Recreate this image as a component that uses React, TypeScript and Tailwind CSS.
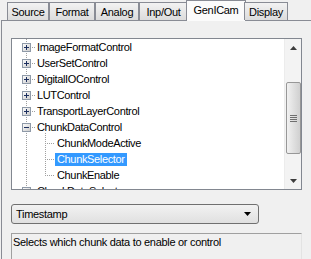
import React from "react";

const tabs = [
  { label: "Source", w: 42 },
  { label: "Format", w: 46 },
  { label: "Analog", w: 44 },
  { label: "Inp/Out", w: 49 },
  { label: "GenICam", w: 56, active: true },
  { label: "Display", w: 44 },
];

type Row = { label: string; level: number; expander?: "plus" | "minus"; selected?: boolean };

const rows: Row[] = [
  { label: "ImageFormatControl", level: 0, expander: "plus" },
  { label: "UserSetControl", level: 0, expander: "plus" },
  { label: "DigitalIOControl", level: 0, expander: "plus" },
  { label: "LUTControl", level: 0, expander: "plus" },
  { label: "TransportLayerControl", level: 0, expander: "plus" },
  { label: "ChunkDataControl", level: 0, expander: "minus" },
  { label: "ChunkModeActive", level: 1 },
  { label: "ChunkSelector", level: 1, selected: true },
  { label: "ChunkEnable", level: 1 },
  { label: "ChunkDataSelector", level: 0, expander: "plus" },
];

function Expander({ kind }: { kind: "plus" | "minus" }) {
  return (
    <svg width="9" height="9" viewBox="0 0 9 9" className="block shrink-0">
      <defs>
        <linearGradient id={`eg-${kind}`} x1="0" y1="0" x2="1" y2="1">
          <stop offset="0" stopColor="#ffffff" />
          <stop offset="1" stopColor="#c8c8c8" />
        </linearGradient>
      </defs>
      <rect x="0.5" y="0.5" width="8" height="8" fill={`url(#eg-${kind})`} stroke="#8f9aa8" />
      <rect x="2" y="4" width="5" height="1" fill="#1d2f5e" />
      {kind === "plus" && <rect x="4" y="2" width="1" height="5" fill="#1d2f5e" />}
    </svg>
  );
}

function TreeLines() {
  const dots: React.ReactNode[] = [];
  for (let y = 0; y < 150; y += 2) dots.push(<rect key={`v0-${y}`} x={14} y={y} width={1} height={1} fill="#a0a0a0" />);
  rows.forEach((r, i) => {
    const cy = i * 16 + 8;
    if (r.level === 0) {
      for (let x = 20; x <= 23; x += 2) dots.push(<rect key={`h0-${i}-${x}`} x={x} y={cy} width={1} height={1} fill="#a0a0a0" />);
    } else {
      for (let x = 35; x <= 41; x += 2) dots.push(<rect key={`h1-${i}-${x}`} x={x} y={cy} width={1} height={1} fill="#a0a0a0" />);
    }
  });
  for (let y = 94; y <= 136; y += 2) dots.push(<rect key={`v1-${y}`} x={33} y={y} width={1} height={1} fill="#a0a0a0" />);
  return (
    <svg className="absolute left-0 top-0" width="270" height="150">
      {dots}
    </svg>
  );
}

function Arrow({ dir }: { dir: "up" | "down" }) {
  return (
    <svg width="7" height="4" viewBox="0 0 7 4">
      {dir === "up" ? <path d="M3.5 0 L7 4 L0 4 Z" fill="#3c3c3c" /> : <path d="M0 0 L7 0 L3.5 4 Z" fill="#3c3c3c" />}
    </svg>
  );
}

export default function App() {
  return (
    <div
      className="relative w-[311px] h-[259px] bg-[#f0f0f0] overflow-hidden text-[11px] text-black"
      style={{ fontFamily: '"Liberation Sans", Arial, sans-serif' }}
    >
      {/* tab strip */}
      <div className="h-[20px] flex items-end pl-[7px] relative z-10">
        {tabs.map((t) =>
          t.active ? (
            <div
              key={t.label}
              className="shrink-0 h-[21px] -mb-[1px] -mx-[2px] px-[2px] border border-b-0 border-[#898c95] bg-[#fbfbfb] flex items-start justify-center pt-[1px] leading-[16px] tracking-[-0.3px]"
              style={{ width: t.w + 4 }}
            >
              {t.label}
            </div>
          ) : (
            <div
              key={t.label}
              className="shrink-0 h-[18px] border border-b-0 border-[#898c95] bg-gradient-to-b from-[#f2f2f2] to-[#dcdcdc] flex items-center justify-center leading-[16px] tracking-[-0.3px]"
              style={{ width: t.w }}
            >
              {t.label}
            </div>
          )
        )}
      </div>

      {/* tab page */}
      <div className="ml-[1px] h-[240px] border-l border-t border-[#898c95] bg-[#f0f0f0] pl-[9px] pt-[17px] flex flex-col items-start">
        {/* tree view */}
        <div className="w-[291px] h-[152px] shrink-0 border border-[#828790] bg-white flex">
          <div className="relative flex-1 h-[150px] overflow-hidden">
            <TreeLines />
            {rows.map((r, i) => (
              <div key={i} className="relative h-[16px] flex items-center">
                {r.level === 0 ? (
                  <>
                    <div className="w-[10px] shrink-0" />
                    <Expander kind={r.expander!} />
                    <div className="w-[6px] shrink-0" />
                    <span className="leading-[13px] tracking-[-0.35px] whitespace-nowrap">{r.label}</span>
                  </>
                ) : (
                  <>
                    <div className="w-[43px] shrink-0" />
                    <span
                      className={`leading-[13px] h-[13px] px-[2px] tracking-[-0.35px] whitespace-nowrap ${
                        r.selected ? "bg-[#3399ff] text-white" : ""
                      }`}
                    >
                      {r.label}
                    </span>
                  </>
                )}
              </div>
            ))}
          </div>
          {/* scrollbar */}
          <div className="w-[17px] shrink-0 h-[150px] bg-[#f3f3f3] border-l border-[#ececec] flex flex-col items-center">
            <div className="h-[17px] w-full flex items-center justify-center">
              <Arrow dir="up" />
            </div>
            <div className="h-[26px]" />
            <div className="w-[15px] h-[72px] rounded-[2px] border border-[#979797] bg-gradient-to-r from-[#f1f1f1] via-[#e0e0e0] to-[#d0d0d0] flex flex-col items-center justify-center gap-[1px]">
              {[0, 1, 2, 3].map((k) => (
                <div key={k} className="w-[7px] h-[1px] bg-[#6f6f6f]" />
              ))}
            </div>
            <div className="flex-1" />
            <div className="h-[17px] w-full flex items-center justify-center">
              <Arrow dir="down" />
            </div>
          </div>
        </div>

        {/* combobox */}
        <div className="mt-[14px] w-[248px] shrink-0 h-[20px] rounded-[3px] border border-[#707070] bg-gradient-to-b from-[#f2f2f2] to-[#e0e0e0] flex items-center justify-between pl-[4px] pr-[7px]">
          <span className="tracking-[-0.3px]">Timestamp</span>
          <svg width="7" height="4" viewBox="0 0 7 4" className="shrink-0">
            <path d="M0 0 L7 0 L3.5 4 Z" fill="#000" />
          </svg>
        </div>

        {/* description */}
        <div className="mt-[9px] w-[291px] shrink-0 h-[40px] border border-[#a0a0a0] border-r-[#e3e3e3] bg-[#f0f0f0] pl-[1px] pt-[1px] leading-[14px] tracking-[-0.3px]">
          Selects which chunk data to enable or control
        </div>
      </div>
    </div>
  );
}
